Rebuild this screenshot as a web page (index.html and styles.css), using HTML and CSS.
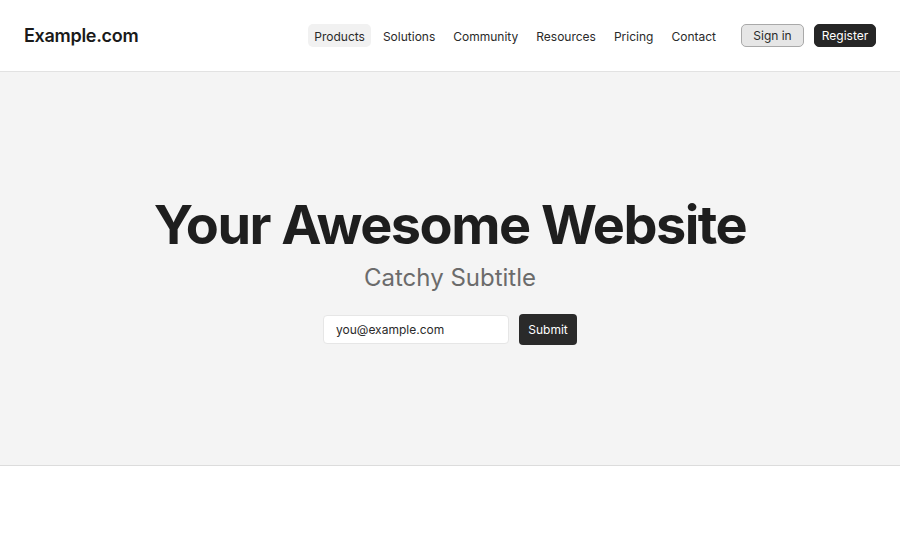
FILE: index.html
```html
<!DOCTYPE html>
<html lang="en">
<head>
    <meta charset="UTF-8">
    <meta name="viewport" content="width=device-width, initial-scale=1.0">
    <title>Example.com</title>
    <link rel="stylesheet" href="styles.css">
</head>
<body>
    <header class="site-header">
        <a class="logo" href="#">Example.com</a>
        <nav class="main-nav">
            <a class="nav-link active" href="#">Products</a>
            <a class="nav-link" href="#">Solutions</a>
            <a class="nav-link" href="#">Community</a>
            <a class="nav-link" href="#">Resources</a>
            <a class="nav-link" href="#">Pricing</a>
            <a class="nav-link" href="#">Contact</a>
        </nav>
        <div class="auth-buttons">
            <button class="signin-button">Sign in</button>
            <button class="register-button">Register</button>
        </div>
    </header>

    <section class="hero">
        <h1 class="hero-title">Your Awesome Website</h1>
        <p class="hero-subtitle">Catchy Subtitle</p>
        <form class="signup-form">
            <input type="email" class="email-input" value="you@example.com">
            <button type="button" class="submit-button">Submit</button>
        </form>
    </section>
</body>
</html>
```

FILE: styles.css
```css
* {
    margin: 0;
    padding: 0;
    box-sizing: border-box;
    font-family: Inter, 'Noto Sans', sans-serif;
}

body {
    background: #ffffff;
    color: #1f1f1f;
}

.site-header {
    display: flex;
    align-items: center;
    height: 72px;
    padding: 0 24px;
    border-bottom: 1px solid #e2e2e2;
}

.logo {
    font-size: 18px;
    font-weight: 600;
    color: #1a1a1a;
    text-decoration: none;
    letter-spacing: -0.3px;
}

.main-nav {
    display: flex;
    gap: 6px;
    margin-left: auto;
}

.nav-link {
    padding: 5px 6px 3px;
    font-size: 12px;
    color: #2a2a2a;
    text-decoration: none;
    border-radius: 5px;
    line-height: 15px;
    white-space: nowrap;
}

.nav-link.active {
    background: #f1f1f1;
}

.auth-buttons {
    display: flex;
    gap: 10px;
    margin-left: 19px;
}

button {
    height: 23px;
    padding: 0;
    font-size: 12px;
    border-radius: 5px;
    white-space: nowrap;
    cursor: pointer;
}

.signin-button {
    width: 63px;
    background: #e6e6e6;
    border: 1px solid #a9a9a9;
    color: #2a2a2a;
}

.register-button {
    width: 62px;
    background: #262626;
    border: 1px solid #262626;
    color: #ffffff;
}

.hero {
    display: flex;
    flex-direction: column;
    align-items: center;
    height: 394px;
    padding-top: 121px;
    background: #f4f4f4;
    border-bottom: 1px solid #dcdcdc;
}

.hero-title {
    font-size: 54px;
    font-weight: 700;
    letter-spacing: -1.5px;
    line-height: 64px;
    color: #1e1e1e;
}

.hero-subtitle {
    margin-top: 6px;
    font-size: 24px;
    color: #6b6b6b;
    line-height: 30px;
}

.signup-form {
    display: flex;
    align-items: center;
    gap: 10px;
    margin-top: 21px;
}

.email-input {
    width: 186px;
    height: 29px;
    padding: 0 12px;
    font-size: 12px;
    color: #2a2a2a;
    background: #ffffff;
    border: 1px solid #e6e6e6;
    border-radius: 4px;
}

.submit-button {
    width: 58px;
    height: 31px;
    background: #2a2a2a;
    border: none;
    color: #ffffff;
    border-radius: 4px;
}
```
